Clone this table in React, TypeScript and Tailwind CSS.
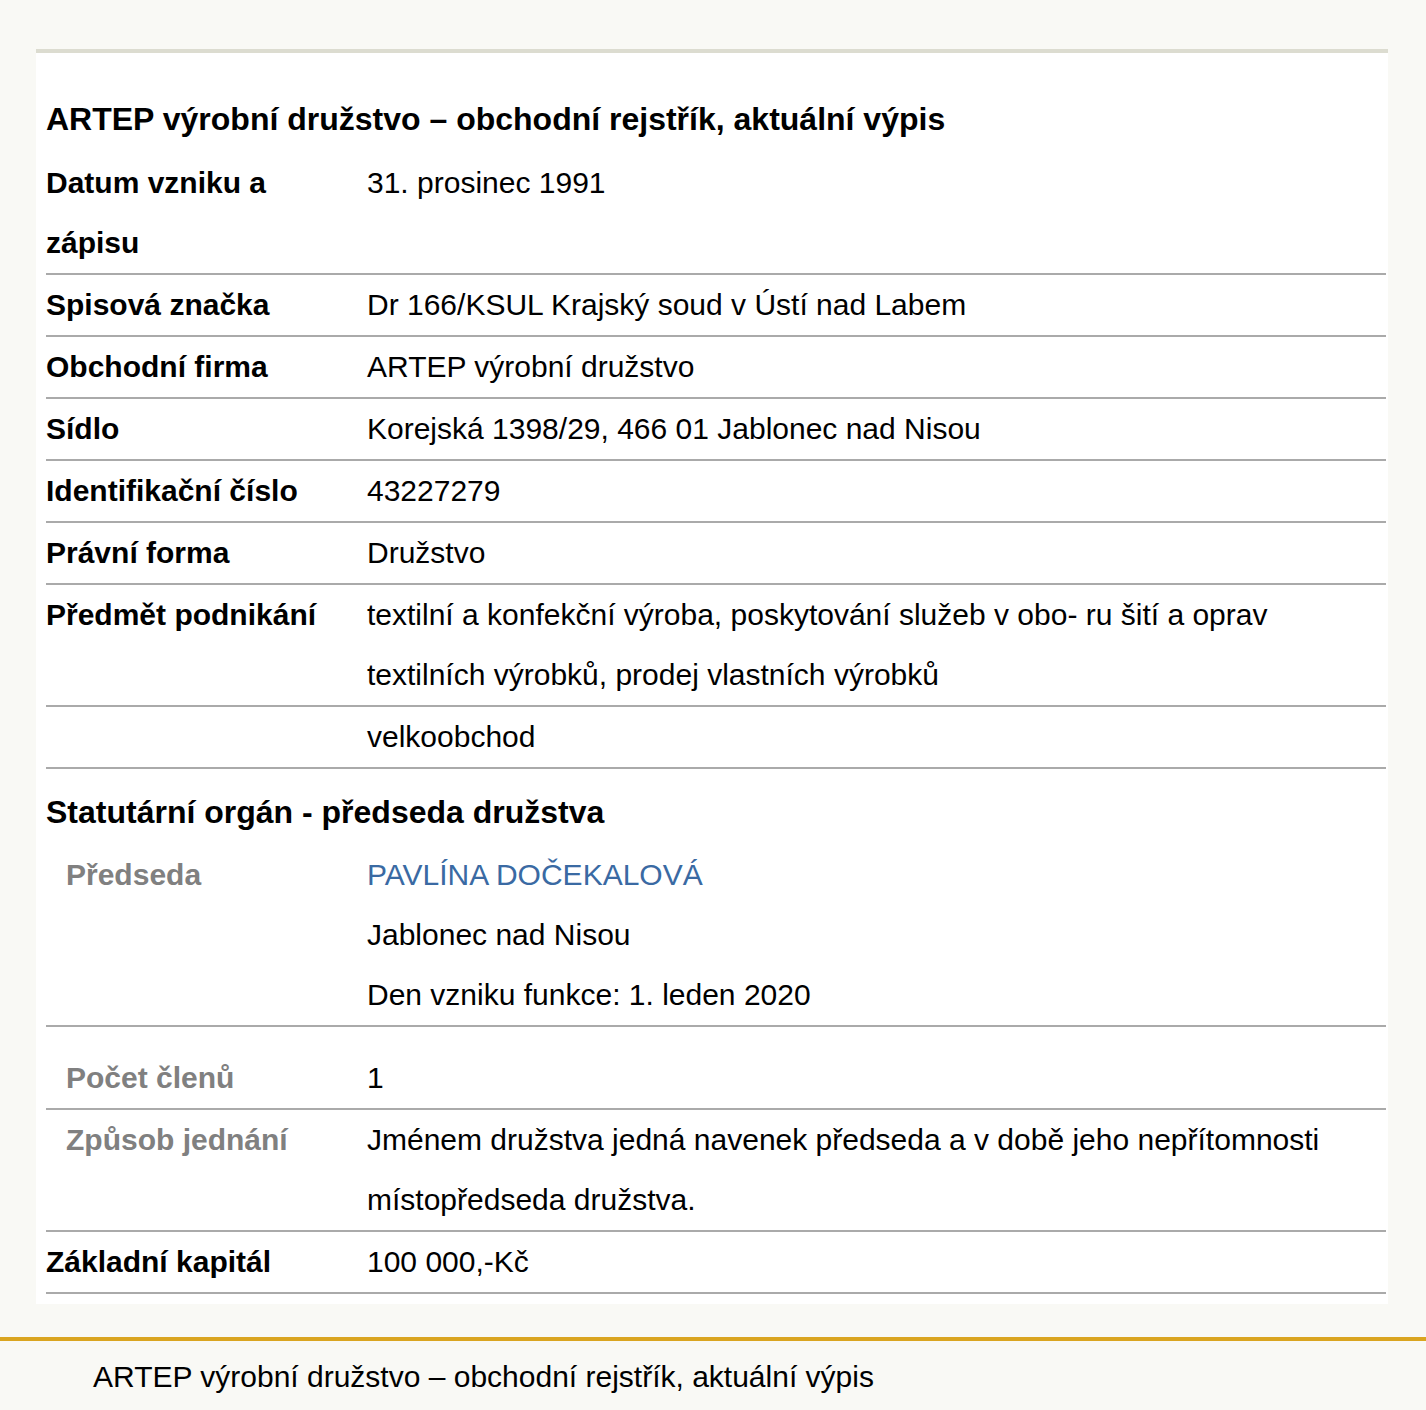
const font = { fontFamily: '"Liberation Sans", Arial, sans-serif' };

type Row = { label: string; lines: string[]; sub?: boolean; blueFirst?: boolean; extraTop?: boolean };

const rows: Row[] = [
  { label: "Datum vzniku a zápisu", lines: ["31. prosinec 1991"] },
  { label: "Spisová značka", lines: ["Dr 166/KSUL Krajský soud v Ústí nad Labem"] },
  { label: "Obchodní firma", lines: ["ARTEP výrobní družstvo"] },
  { label: "Sídlo", lines: ["Korejská 1398/29, 466 01 Jablonec nad Nisou"] },
  { label: "Identifikační číslo", lines: ["43227279"] },
  { label: "Právní forma", lines: ["Družstvo"] },
  {
    label: "Předmět podnikání",
    lines: ["textilní a konfekční výroba, poskytování služeb v obo- ru šití a oprav textilních výrobků, prodej vlastních výrobků"],
  },
  { label: "", lines: ["velkoobchod"] },
];

const organ: Row[] = [
  {
    label: "Předseda",
    sub: true,
    blueFirst: true,
    lines: ["PAVLÍNA DOČEKALOVÁ", "Jablonec nad Nisou", "Den vzniku funkce: 1. leden 2020"],
  },
  { label: "Počet členů", sub: true, extraTop: true, lines: ["1"] },
  {
    label: "Způsob jednání",
    sub: true,
    lines: ["Jménem družstva jedná navenek předseda a v době jeho nepřítomnosti místopředseda družstva."],
  },
  { label: "Základní kapitál", lines: ["100 000,-Kč"] },
];

function RegRow({ row }: { row: Row }) {
  return (
    <div className={`flex border-b-2 border-[#aaaaaa] leading-[60px] ${row.extraTop ? "pt-[21px]" : ""}`}>
      <div
        className={`w-[321px] shrink-0 font-bold ${row.sub ? "pl-[20px] text-[#808080]" : "pr-[40px] text-black"}`}
      >
        {row.label}
      </div>
      <div className="min-w-0 flex-1 pr-[40px] text-black">
        {row.lines.map((l, i) => (
          <div key={i} className={row.blueFirst && i === 0 ? "text-[#3a6aa3]" : ""}>
            {l}
          </div>
        ))}
      </div>
    </div>
  );
}

export default function App() {
  return (
    <div className="min-h-[1410px] bg-[#f9f9f5] pt-[49px] text-[30px]" style={font}>
      <div className="mx-[36px] w-[1352px] border-t-4 border-[#dcdcd0] bg-white pb-[10px] pl-[10px] pr-[2px]">
        <h1 className="mb-[4px] mt-[36px] text-[32px] font-bold leading-[60px] text-black">
          ARTEP výrobní družstvo – obchodní rejstřík, aktuální výpis
        </h1>
        {rows.map((r, i) => (
          <RegRow key={i} row={r} />
        ))}
        <h2 className="mb-[3px] mt-[13px] text-[32px] font-bold leading-[60px] text-black">
          Statutární orgán - předseda družstva
        </h2>
        {organ.map((r, i) => (
          <RegRow key={i} row={r} />
        ))}
      </div>
      <footer className="mt-[33px] border-t-4 border-[#daa520] pl-[93px] pt-[6px] leading-[60px] text-black">
        ARTEP výrobní družstvo – obchodní rejstřík, aktuální výpis
      </footer>
    </div>
  );
}
